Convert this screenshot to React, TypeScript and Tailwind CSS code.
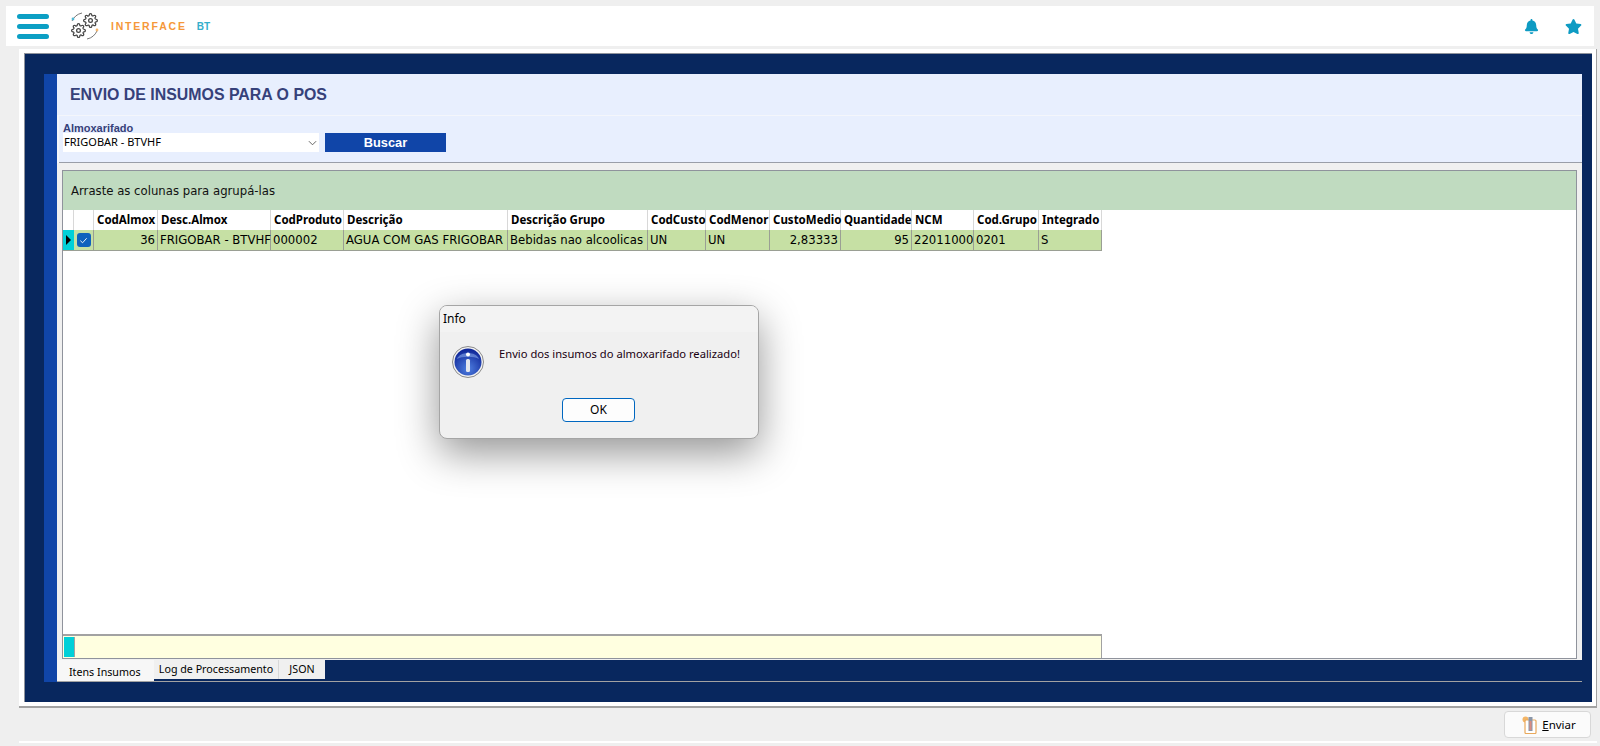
import { FaBell, FaStar } from "react-icons/fa";
import { FiSettings } from "react-icons/fi";

const columns = [
  { title: "CodAlmox", value: "36", w: "w-[64px]", right: true },
  { title: "Desc.Almox", value: "FRIGOBAR - BTVHF", w: "w-[113px]" },
  { title: "CodProduto", value: "000002", w: "w-[73px]" },
  { title: "Descrição", value: "AGUA COM GAS FRIGOBAR", w: "w-[164px]" },
  { title: "Descrição Grupo", value: "Bebidas nao alcoolicas", w: "w-[140px]" },
  { title: "CodCusto", value: "UN", w: "w-[58px]" },
  { title: "CodMenor", value: "UN", w: "w-[64px]" },
  { title: "CustoMedio", value: "2,83333", w: "w-[71px]", right: true },
  { title: "Quantidade", value: "95", w: "w-[71px]", right: true },
  { title: "NCM", value: "22011000", w: "w-[62px]" },
  { title: "Cod.Grupo", value: "0201", w: "w-[65px]" },
  { title: "Integrado", value: "S", w: "w-[63px]" },
];

const Logo = () => (
  <div className="relative w-[28px] h-[28px] ml-[22px] text-[#444]">
    <FiSettings size={15} className="absolute left-[12px] top-[1px]" />
    <FiSettings size={15} className="absolute left-[0px] top-[11px]" />
    <svg viewBox="0 0 28 28" className="absolute inset-0 w-[28px] h-[28px]" fill="none">
      <path d="M1 9 C3 5 6 2 11 1" stroke="#555" strokeWidth="0.8" />
      <path d="M26 19 C24 23 21 26 16 27" stroke="#555" strokeWidth="0.8" />
      <circle cx="2" cy="7" r="1.4" fill="#4fb6d2" />
      <circle cx="26" cy="18" r="1.4" fill="#f5b66e" />
    </svg>
  </div>
);

const InfoIcon = () => (
  <svg viewBox="0 0 32 32" className="w-[32px] h-[32px]">
    <defs>
      <radialGradient id="infoFill" cx="50%" cy="75%" r="70%">
        <stop offset="0%" stopColor="#4f7fe0" />
        <stop offset="100%" stopColor="#10289a" />
      </radialGradient>
    </defs>
    <circle cx="16" cy="16" r="15.5" fill="#f2f2f2" stroke="#8a8a8a" strokeWidth="1" />
    <circle cx="16" cy="16" r="13.5" fill="url(#infoFill)" />
    <path d="M5 13 C8 5 24 5 27 13 C22 10 10 10 5 13 Z" fill="#8fb0ee" opacity="0.55" />
    <circle cx="16" cy="8.5" r="2" fill="#fff" />
    <rect x="14" y="13" width="4" height="13" rx="1.5" fill="#e4e6ee" />
  </svg>
);

const EnviarIcon = () => (
  <svg viewBox="0 0 16 18" className="w-[16px] h-[18px]">
    <circle cx="3.5" cy="3.5" r="3" fill="#f3b566" />
    <rect x="3" y="4" width="11" height="13.5" rx="1" fill="#fff" stroke="#e9a95c" strokeWidth="1.2" />
    <rect x="6.5" y="1" width="4" height="14" fill="#8a96a8" />
    <rect x="7.5" y="5" width="2" height="9" fill="#d98a80" />
  </svg>
);

const DataGrid = () => (
  <div className="h-[489px] border border-[#8f939c] bg-white flex flex-col font-['DejaVu_Sans',sans-serif]">
    <div className="h-[39px] shrink-0 bg-[#c0dbc0] pl-[8px] pt-[12px] text-[11.7px] leading-[16px] text-[#111]">
      Arraste as colunas para agrupá-las
    </div>
    <div className="flex h-[20px] shrink-0 bg-white text-[11.5px] leading-[20px] font-bold text-black font-['Noto_Sans',sans-serif]">
      <div className="w-[11px] border-r border-[#d8d8d8]" />
      <div className="w-[20px] border-r border-[#d8d8d8]" />
      {columns.map((c) => (
        <div key={c.title} className={`${c.w} px-[3px] border-r border-[#d8d8d8] whitespace-nowrap`}>
          {c.title}
        </div>
      ))}
    </div>
    <div className="flex h-[21px] w-[1039px] shrink-0 border-b border-[#9a9f94] bg-[#c6e0a4] text-[11.7px] leading-[20px] text-black">
      <div className="w-[11px] bg-[#00d0d8] flex items-center pl-[3px]">
        <div className="w-0 h-0 border-y-[5px] border-y-transparent border-l-[5px] border-l-black" />
      </div>
      <div className="w-[20px] flex items-center justify-center border-r border-[#9a9f94]">
        <div className="w-[14px] h-[14px] rounded-[3px] bg-[#0f62bd] flex items-center justify-center">
          <svg viewBox="0 0 10 10" className="w-[9px] h-[9px]" fill="none">
            <path d="M1.5 5.2 L4 7.5 L8.5 2.5" stroke="#fff" strokeWidth="1" />
          </svg>
        </div>
      </div>
      {columns.map((c) => (
        <div
          key={c.title}
          className={`${c.w} px-[2px] border-r border-[#9a9f94] whitespace-nowrap ${c.right ? "text-right" : ""}`}
        >
          {c.value}
        </div>
      ))}
    </div>
    <div className="flex-1" />
    <div className="flex h-[24px] w-[1039px] shrink-0 border-t-2 border-r border-[#a2a2a2] bg-[#ffffe0] pl-[1px] pt-[1px]">
      <div className="w-[11px] h-[20px] bg-[#00d0d8] border-r border-[#a2a2a2]" />
    </div>
  </div>
);

const Tabs = () => (
  <div className="flex h-[22px] shrink-0 bg-[#08275e] border-b border-[#a2a2a2] text-[10.7px] text-black font-['Noto_Sans',sans-serif]">
    <div className="w-[97px] h-[21px] bg-[#f7f7f7] pl-[12px] leading-[24px] whitespace-nowrap">Itens Insumos</div>
    <div className="w-[125px] h-[19px] bg-[#f0f0f0] border-r border-[#d8d8d8] text-center leading-[18px] whitespace-nowrap">
      Log de Processamento
    </div>
    <div className="w-[46px] h-[19px] bg-[#f0f0f0] text-center leading-[18px]">JSON</div>
  </div>
);

export default function App() {
  return (
    <div className="relative w-[1600px] h-[746px] overflow-hidden bg-[#efefef] font-['Noto_Sans',sans-serif]">
      <div className="ml-[6px] pt-[6px] w-[1588px]">
        <div className="h-[40px] bg-white flex items-center pl-[11px] pr-[12px]">
          <div className="flex flex-col gap-[5px]">
            <div className="w-[32px] h-[5px] rounded-full bg-[#0c9fc4]" />
            <div className="w-[32px] h-[5px] rounded-full bg-[#0c9fc4]" />
            <div className="w-[32px] h-[5px] rounded-full bg-[#0c9fc4]" />
          </div>
          <Logo />
          <span className="ml-[12px] mt-[1px] text-[10.5px] font-bold tracking-[1.8px] text-[#f5983a] font-['Liberation_Sans',sans-serif]">
            INTERFACE
          </span>
          <span className="ml-[10px] mt-[1px] text-[10px] font-bold text-[#34aecb] font-['Liberation_Sans',sans-serif]">BT</span>
          <div className="ml-auto flex items-center gap-[26px] text-[#0e9bc3]">
            <FaBell size={15} />
            <FaStar size={17} />
          </div>
        </div>
      </div>

      <div className="ml-[19px] mt-[3px] w-[1578px] h-[659px] bg-white border-b-2 border-r border-[#a2a2a2] pt-[4px] pl-[5px] pr-[4px] pb-[4px]">
        <div className="h-full bg-[#08275e] border-t border-l border-[#8f939c] pt-[20px] pl-[19px] pr-[10px]">
          <div className="flex h-[608px]">
            <div className="w-[13px] bg-[#1045a8]" />
            <div className="flex-1 flex flex-col bg-[#f4f6fb]">
              <div className="h-[41px] shrink-0 bg-[#e8effe] pl-[13px] flex items-center text-[15.9px] font-bold text-[#36417a] font-['Liberation_Sans',sans-serif]">
                ENVIO DE INSUMOS PARA O POS
              </div>
              <div className="h-[47px] mt-[1px] ml-[2px] shrink-0 bg-[#e8effe] border-b border-[#9a9ea8] pl-[4px] pt-[7px]">
                <div className="text-[11px] leading-[10px] font-bold text-[#36417a] font-['Liberation_Sans',sans-serif]">
                  Almoxarifado
                </div>
                <div className="flex gap-[6px]">
                  <div className="w-[256px] h-[19px] bg-white flex items-center pl-[1px] pr-[2px] text-[11px] text-black">
                    FRIGOBAR - BTVHF
                    <svg viewBox="0 0 10 6" className="ml-auto w-[9px] h-[6px]" fill="none">
                      <path d="M1 1 L5 5 L9 1" stroke="#555" strokeWidth="1" />
                    </svg>
                  </div>
                  <div className="w-[121px] h-[19px] bg-[#1045a8] text-center text-[12.8px] leading-[19px] font-bold text-white font-['Liberation_Sans',sans-serif]">
                    Buscar
                  </div>
                </div>
              </div>
              <div className="flex-1 pl-[5px] pr-[5px] pt-[7px] flex flex-col min-h-0 bg-[#f0f0f0]">
                <DataGrid />
              </div>
              <Tabs />
            </div>
          </div>
        </div>
      </div>

      <div className="ml-[19px] w-[1578px] h-[35px] border-b-2 border-white flex items-start justify-end pr-[6px] pt-[3px]">
        <div className="w-[87px] h-[27px] rounded-[4px] border border-[#d8d8d8] bg-[#fbfbfb] flex items-center justify-center gap-[4px] pl-[3px] text-[11.5px] text-black">
          <EnviarIcon />
          <span>
            <span className="underline">E</span>nviar
          </span>
        </div>
      </div>

      <div className="absolute left-[439px] top-[305px] w-[320px] h-[134px] rounded-[8px] border border-[#a5a5a5] bg-[#f0f0f0] shadow-[0_14px_40px_rgba(0,0,0,0.42)] overflow-hidden text-[11.2px] text-black">
        <div className="h-[26px] bg-[#f3f3f3] pl-[3px] leading-[26px] text-[12px]">Info</div>
        <div className="flex pl-[12px] pt-[14px]">
          <InfoIcon />
          <div className="ml-[15px] leading-[15px] text-[#1a0010]">Envio dos insumos do almoxarifado realizado!</div>
        </div>
        <div className="ml-[122px] mt-[20px] w-[73px] h-[24px] rounded-[4px] border border-[#0067c0] bg-[#fdfdfd] text-center leading-[22px] text-[12px]">
          OK
        </div>
      </div>
    </div>
  );
}
